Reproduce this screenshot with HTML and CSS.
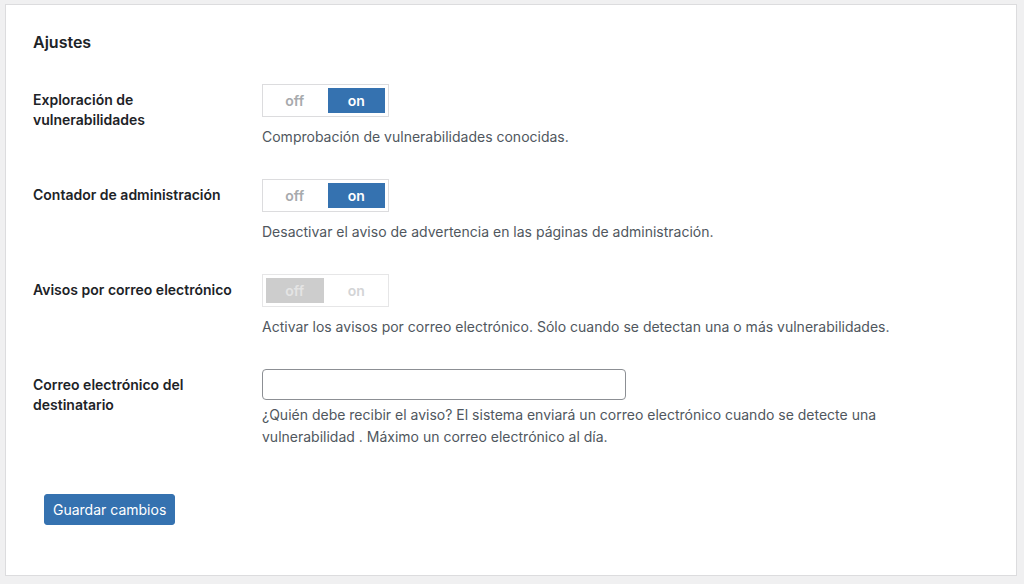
FILE: index.html
```html
<!DOCTYPE html>
<html lang="es">
<head>
<meta charset="utf-8">
<title>Ajustes</title>
<link rel="stylesheet" href="styles.css">
</head>
<body>
<div class="panel">
  <h2 class="title">Ajustes</h2>
  <form class="settings">
    <div class="row">
      <div class="label">Exploración de vulnerabilidades</div>
      <div class="field">
        <div class="toggle">
          <span class="seg">off</span>
          <span class="seg active">on</span>
        </div>
        <p class="desc">Comprobación de vulnerabilidades conocidas.</p>
      </div>
    </div>
    <div class="row">
      <div class="label">Contador de administración</div>
      <div class="field">
        <div class="toggle">
          <span class="seg">off</span>
          <span class="seg active">on</span>
        </div>
        <p class="desc">Desactivar el aviso de advertencia en las páginas de administración.</p>
      </div>
    </div>
    <div class="row">
      <div class="label">Avisos por correo electrónico</div>
      <div class="field">
        <div class="toggle disabled">
          <span class="seg active">off</span>
          <span class="seg">on</span>
        </div>
        <p class="desc">Activar los avisos por correo electrónico. Sólo cuando se detectan una o más vulnerabilidades.</p>
      </div>
    </div>
    <div class="row">
      <div class="label">Correo electrónico del destinatario</div>
      <div class="field">
        <input class="input" type="text">
        <p class="desc desc-input">¿Quién debe recibir el aviso? El sistema enviará un correo electrónico cuando se detecte una vulnerabilidad . Máximo un correo electrónico al día.</p>
      </div>
    </div>
    <div class="actions">
      <button type="button" class="button">Guardar cambios</button>
    </div>
  </form>
</div>
</body>
</html>
```
FILE: styles.css
```css
html, body {
  margin: 0;
  padding: 0;
  background: #f0f0f1;
}
body {
  padding: 4px 7px 8px 5px;
  font-family: Inter, "Noto Sans", "Liberation Sans", sans-serif;
  font-size: 14px;
  color: #1d2327;
}
.panel {
  box-sizing: border-box;
  height: 572px;
  background: #fff;
  border: 1px solid #dcdcde;
  padding: 27px 27px 0 27px;
}
.title {
  margin: 0;
  font-size: 16px;
  line-height: 20px;
  font-weight: 600;
  color: #1d2327;
}
.settings {
  margin-top: 17px;
}
.row {
  display: grid;
  grid-template-columns: 229px 1fr;
  padding: 15px 0 16px;
}
.label {
  padding-top: 6px;
  padding-right: 24px;
  font-weight: 600;
  line-height: 20px;
  color: #1d2327;
}
.field {
  display: flex;
  flex-direction: column;
  align-items: flex-start;
}
.toggle {
  box-sizing: border-box;
  display: flex;
  gap: 4px;
  width: 127px;
  height: 33px;
  padding: 3px;
  border: 1px solid #dcdcde;
  margin-bottom: 5px;
}
.seg {
  width: 58px;
  display: flex;
  align-items: center;
  justify-content: center;
  font-weight: 600;
  color: #a7aaad;
}
.seg.active {
  background: #3572b0;
  color: #fff;
}
.toggle.disabled {
  border-color: #e6e6e7;
}
.toggle.disabled .seg {
  color: #d3d4d6;
}
.toggle.disabled .seg.active {
  background: #cdcdcd;
  color: #e4e4e4;
}
.desc {
  margin: 4px 0 0;
  line-height: 22px;
  color: #50575e;
  max-width: 640px;
}
.input {
  box-sizing: border-box;
  width: 364px;
  height: 31px;
  margin: 0;
  border: 1px solid #8c8f94;
  border-radius: 4px;
  background: #fff;
  padding: 0 8px;
  font: inherit;
}
.actions {
  padding: 30px 0 0 11px;
}
.button {
  box-sizing: border-box;
  height: 31px;
  padding: 0 8px;
  border: 1px solid #3572b0;
  border-radius: 3px;
  background: #3572b0;
  color: #fff;
  font: inherit;
  line-height: 29px;
  cursor: pointer;
}
```
